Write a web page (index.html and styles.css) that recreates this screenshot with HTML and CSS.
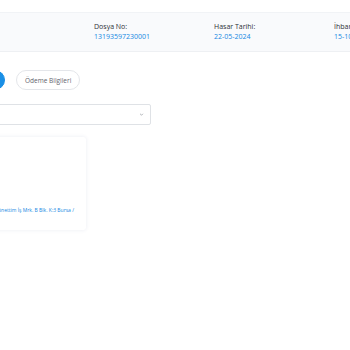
FILE: index.html
```html
<!DOCTYPE html>
<html lang="tr">
<head>
    <meta charset="UTF-8">
    <title>Dosya Detay</title>
    <link rel="stylesheet" href="styles.css">
</head>
<body>
    <div class="page">
        <div class="info-bar">
            <div class="info-item">
                <span class="label">Dosya No:</span>
                <span class="value">13193597230001</span>
            </div>
            <div class="info-item">
                <span class="label">Hasar Tarihi:</span>
                <span class="value">22-05-2024</span>
            </div>
            <div class="info-item">
                <span class="label">İhbar Tarihi:</span>
                <span class="value">15-10-2024</span>
            </div>
        </div>

        <div class="tabs">
            <button class="tab active"></button>
            <button class="tab">Ödeme Bilgileri</button>
        </div>

        <div class="select">
            <svg class="chevron" viewBox="0 0 10 10"><path d="M3 4l2 2 2-2"/></svg>
        </div>

        <div class="card">
            <p class="address">Yönettim İş Mrk. B Blk. K:3 Bursa /</p>
        </div>
    </div>
</body>
</html>
```

FILE: styles.css
```css
* {
    margin: 0;
    padding: 0;
    box-sizing: border-box;
}
body {
    background: #fff;
    font-family: "Open Sans", "Lato", sans-serif;
    overflow: hidden;
    width: 350px;
    height: 350px;
}
.page {
    margin-left: -146px;
    width: 700px;
    padding-top: 12px;
}
.info-bar {
    display: flex;
    height: 40px;
    align-items: center;
    padding-left: 240px;
    background: #f9fafc;
    border-top: 1px solid #f1f3f6;
    border-bottom: 1px solid #eef0f3;
}
.info-item {
    width: 120px;
    display: flex;
    flex-direction: column;
}
.label {
    font-size: 7px;
    line-height: 10px;
    color: #2c3036;
}
.value {
    font-size: 7px;
    line-height: 10px;
    color: #1689e3;
}
.tabs {
    display: flex;
    gap: 11px;
    margin-top: 18px;
    margin-left: 100px;
}
.tab {
    height: 20px;
    border-radius: 10px;
    font-family: inherit;
    font-size: 6.5px;
    padding: 0 8px;
    border: 1px solid #e4e6ea;
    background: #fff;
    color: #5f646c;
}
.tab.active {
    width: 51px;
    background: #1a8fe6;
    border-color: #1a8fe6;
}
.select {
    display: flex;
    align-items: center;
    justify-content: flex-end;
    width: 197px;
    height: 21px;
    margin-top: 14px;
    margin-left: 100px;
    border: 1px solid #dfe2e6;
    border-radius: 2px;
    padding: 0 5px;
}
.chevron {
    width: 7px;
    height: 7px;
    fill: none;
    stroke: #8a8f96;
    stroke-width: 1;
}
.card {
    width: 132px;
    height: 93px;
    margin-top: 12px;
    margin-left: 100px;
    border-radius: 3px;
    background: #fff;
    box-shadow: 0 0 4px rgba(30, 60, 120, 0.09);
    display: flex;
    justify-content: flex-end;
    align-items: flex-end;
    padding: 0 12px 16px;
}
.address {
    font-size: 5px;
    line-height: 8px;
    white-space: nowrap;
    color: #1689e3;
}
```
